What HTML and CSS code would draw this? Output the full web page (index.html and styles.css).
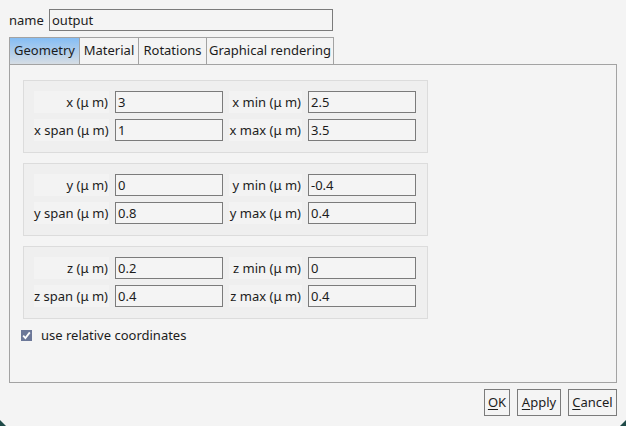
FILE: index.html
```html
<!DOCTYPE html>
<html>
<head>
<meta charset="utf-8">
<link rel="stylesheet" href="styles.css">
</head>
<body>
<div class="dialog">
  <div class="name-row">
    <span class="name-label">name</span>
    <div class="field name-field">output</div>
  </div>
  <div class="tabs">
    <div class="tab tab-geo active">Geometry</div>
    <div class="tab tab-mat">Material</div>
    <div class="tab tab-rot">Rotations</div>
    <div class="tab tab-gfx">Graphical rendering</div>
  </div>
  <div class="panel">
    <div class="group">
      <div class="lbl">x (μ m)</div><div class="field">3</div>
      <div class="lbl">x min (μ m)</div><div class="field">2.5</div>
      <div class="lbl">x span (μ m)</div><div class="field">1</div>
      <div class="lbl">x max (μ m)</div><div class="field">3.5</div>
    </div>
    <div class="group">
      <div class="lbl">y (μ m)</div><div class="field">0</div>
      <div class="lbl">y min (μ m)</div><div class="field">-0.4</div>
      <div class="lbl">y span (μ m)</div><div class="field">0.8</div>
      <div class="lbl">y max (μ m)</div><div class="field">0.4</div>
    </div>
    <div class="group">
      <div class="lbl">z (μ m)</div><div class="field">0.2</div>
      <div class="lbl">z min (μ m)</div><div class="field">0</div>
      <div class="lbl">z span (μ m)</div><div class="field">0.4</div>
      <div class="lbl">z max (μ m)</div><div class="field">0.4</div>
    </div>
    <div class="check-row">
      <span class="checkbox"><svg width="11" height="11" viewBox="0 0 11 11"><path d="M2.2 5.6 L4.4 8 L8.8 2.4" fill="none" stroke="#fff" stroke-width="1.8"/></svg></span>
      <span>use relative coordinates</span>
    </div>
  </div>
  <div class="buttons">
    <div class="btn btn-ok"><u>O</u>K</div>
    <div class="btn btn-apply"><u>A</u>pply</div>
    <div class="btn btn-cancel"><u>C</u>ancel</div>
  </div>
</div>
<div class="grip-left"></div>
<div class="grip-right"></div>
</body>
</html>
```

FILE: styles.css
```css
html, body {
  margin: 0;
  padding: 0;
  background: #f4f4f4;
  width: 626px;
  height: 426px;
  overflow: hidden;
  font-family: "Noto Sans", "Open Sans", sans-serif;
  font-size: 13px;
  color: #1c1c1c;
}

.dialog {
  padding: 9px 9px 0 9px;
  display: flex;
  flex-direction: column;
}

.name-row {
  display: flex;
  align-items: center;
  height: 22px;
}

.name-label {
  width: 40px;
  line-height: 22px;
}

.field {
  box-sizing: border-box;
  height: 22px;
  border: 1px solid #7b7b7b;
  background: #f4f4f4;
  padding-left: 2px;
  line-height: 20px;
  white-space: nowrap;
}

.name-field {
  width: 284px;
}

.tabs {
  display: flex;
  margin-top: 6px;
  height: 27px;
}

.tab {
  box-sizing: border-box;
  height: 27px;
  border: 1px solid #a3a3a3;
  border-bottom: none;
  margin-right: -1px;
  line-height: 25px;
  background: #f4f4f4;
  text-align: center;
  white-space: nowrap;
  overflow: hidden;
}

.tab-geo { width: 71px; }
.tab-mat { width: 60px; }
.tab-rot { width: 69px; }
.tab-gfx { width: 128px; }

.tab.active {
  background: linear-gradient(#85bdf4, #d6dde4);
}

.panel {
  box-sizing: border-box;
  width: 608px;
  height: 319px;
  border: 1px solid #a3a3a3;
  padding: 15px 13px 0 13px;
  display: flex;
  flex-direction: column;
  gap: 10px;
}

.group {
  box-sizing: border-box;
  width: 405px;
  height: 73px;
  border: 1px solid #dcdcdc;
  background: #efefef;
  padding: 10px 11px 0 10px;
  display: grid;
  grid-template-columns: 75px 108px 73px 108px;
  grid-template-rows: 22px 22px;
  column-gap: 6px;
  row-gap: 6px;
}

.lbl {
  background: #f3f3f3;
  text-align: right;
  line-height: 22px;
  padding-right: 1px;
  white-space: nowrap;
}

.check-row {
  display: flex;
  align-items: center;
  gap: 9px;
  margin-top: -3px;
  margin-left: -2px;
  line-height: 18px;
}

.checkbox {
  width: 11px;
  height: 11px;
  background: #6c7899;
  display: block;
}

.checkbox svg {
  display: block;
}

.buttons {
  display: flex;
  justify-content: flex-end;
  gap: 7px;
  margin-top: 6px;
  width: 608px;
}

.btn {
  box-sizing: border-box;
  height: 27px;
  border: 1px solid #7b7b7b;
  line-height: 25px;
  text-align: center;
  background: #f4f4f4;
}

.btn-ok { width: 26px; }
.btn-apply { width: 44px; }
.btn-cancel { width: 49px; }

.btn u {
  text-decoration-thickness: 1px;
  text-underline-offset: 2px;
}

.grip-left {
  position: absolute;
  left: 0;
  top: 420px;
  width: 0;
  height: 0;
  border-left: 6px solid #1f4a48;
  border-top: 6px solid transparent;
}

.grip-right {
  position: absolute;
  left: 620px;
  top: 420px;
  width: 0;
  height: 0;
  border-right: 6px solid #1f4a48;
  border-top: 6px solid transparent;
}
```
